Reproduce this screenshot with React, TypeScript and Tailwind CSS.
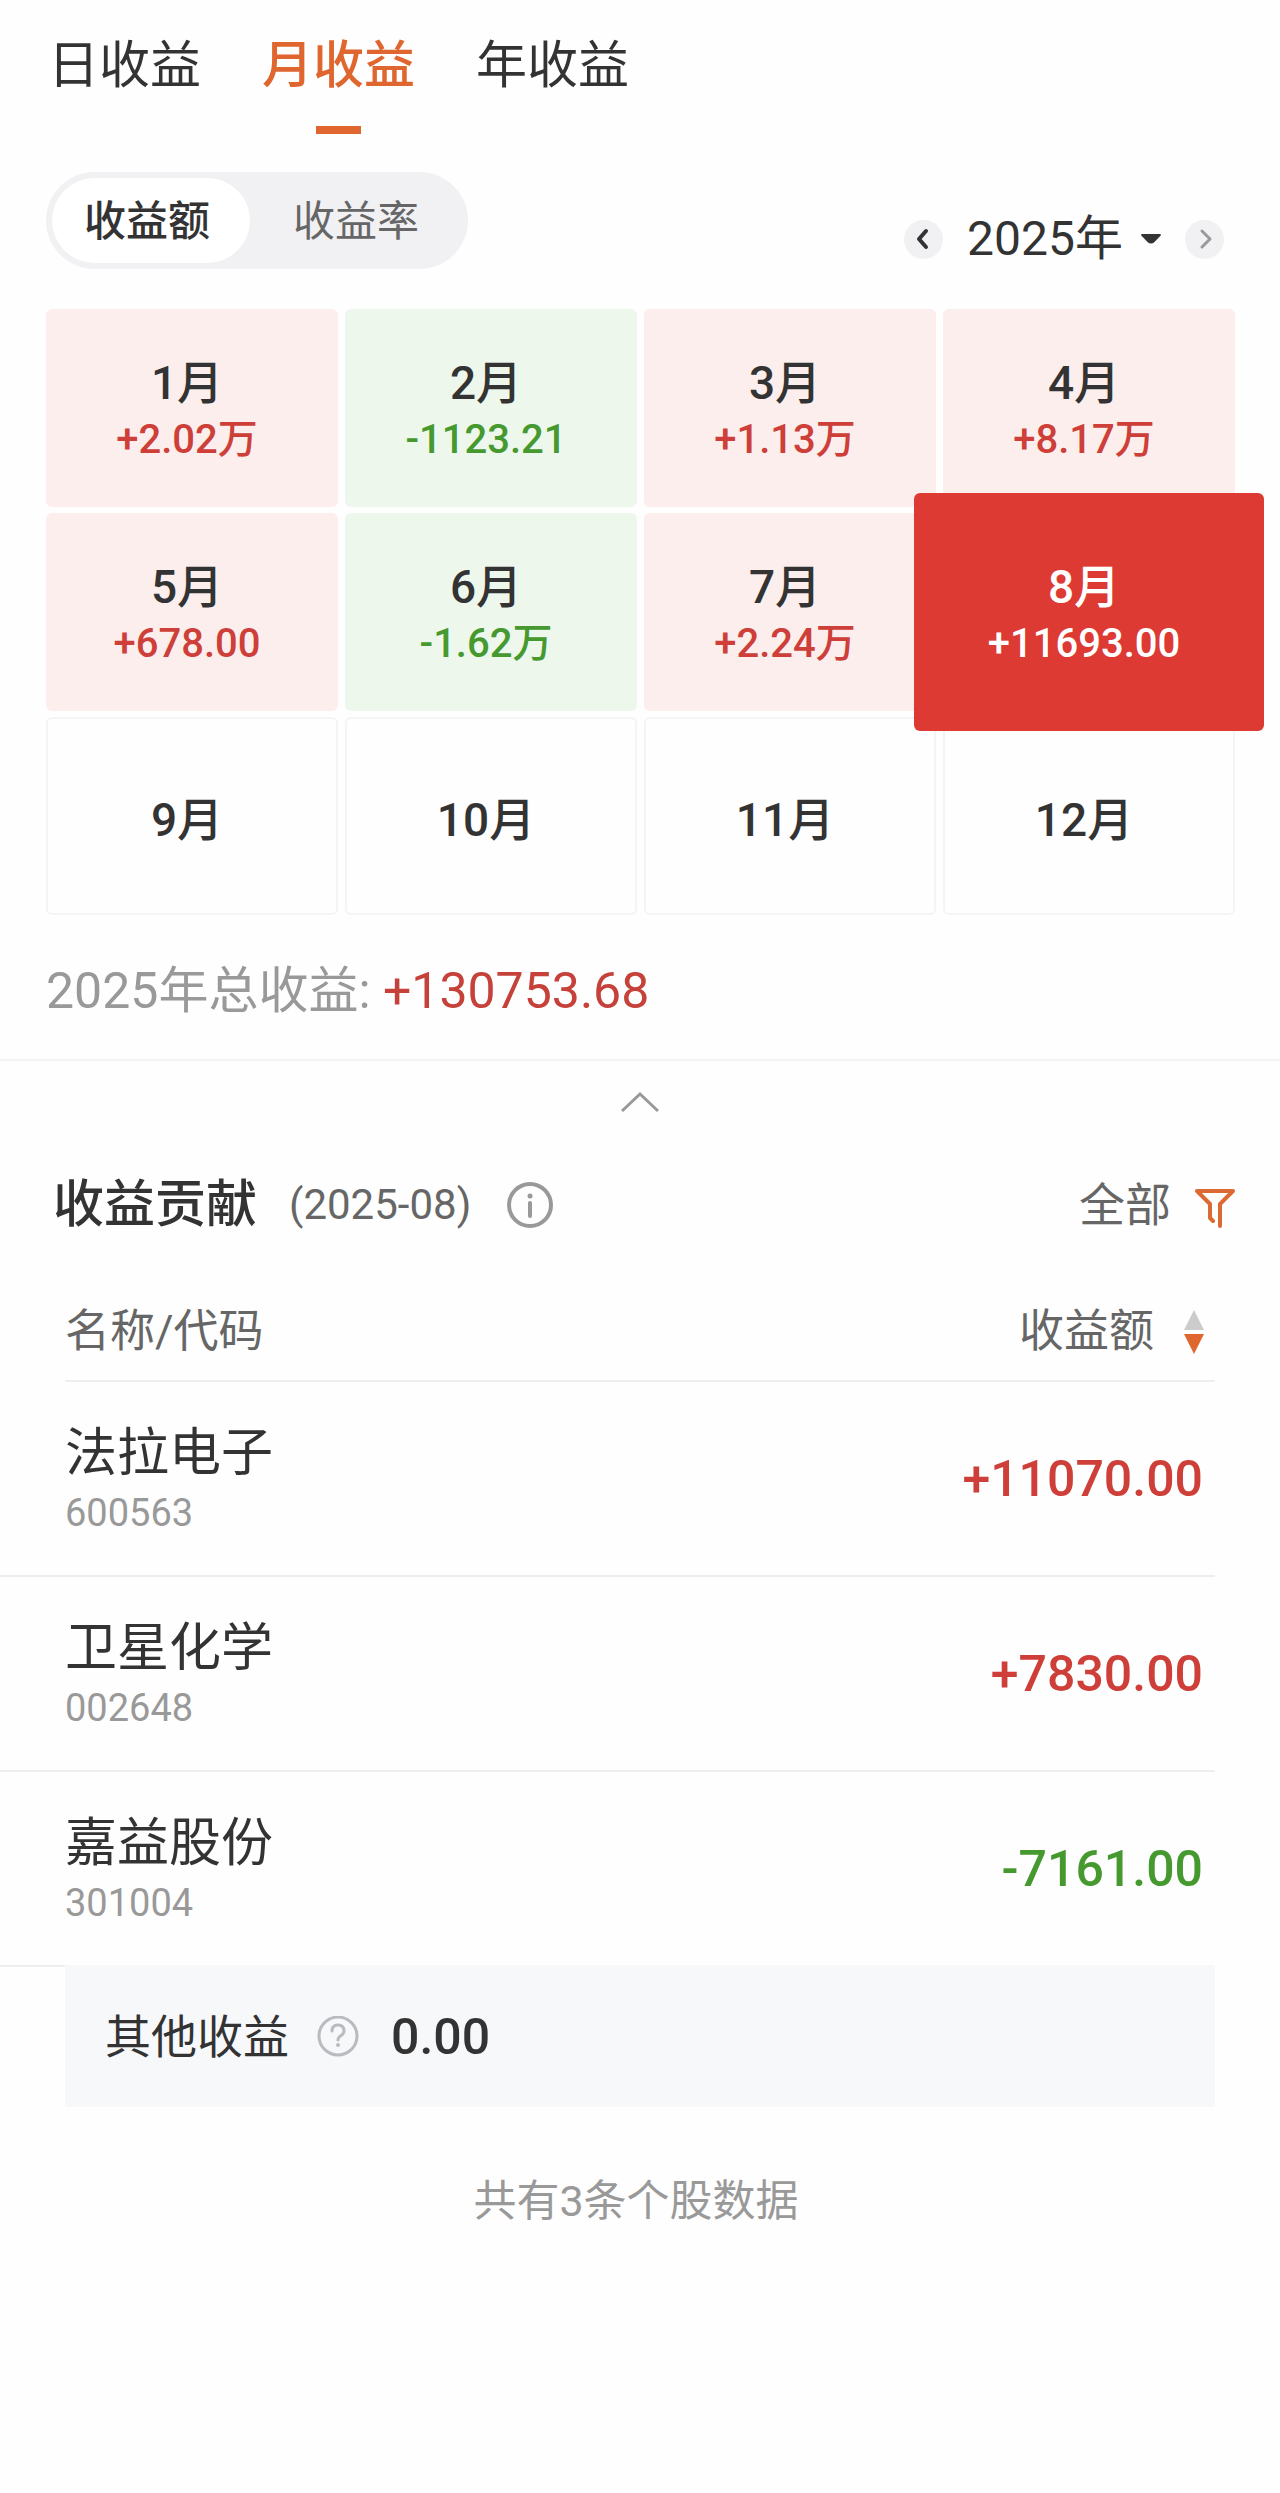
import React, { useState } from 'react'

const tabs = ['日收益', '月收益', '年收益']

const months = [
  { name: '1月', value: '+2.02万' },
  { name: '2月', value: '-1123.21' },
  { name: '3月', value: '+1.13万' },
  { name: '4月', value: '+8.17万' },
  { name: '5月', value: '+678.00' },
  { name: '6月', value: '-1.62万' },
  { name: '7月', value: '+2.24万' },
  { name: '8月', value: '+11693.00' },
  { name: '9月', value: '' },
  { name: '10月', value: '' },
  { name: '11月', value: '' },
  { name: '12月', value: '' },
]

const stocks = [
  { name: '法拉电子', code: '600563', amount: '+11070.00' },
  { name: '卫星化学', code: '002648', amount: '+7830.00' },
  { name: '嘉益股份', code: '301004', amount: '-7161.00' },
]

function monthStyle(value: string, selected: boolean) {
  const loss = value.startsWith('-')
  if (selected) {
    return loss
      ? 'relative z-10 -mx-[29px] -my-5 bg-[#3f9b2f] text-white'
      : 'relative z-10 -mx-[29px] -my-5 bg-[#dd3a33] text-white'
  }
  if (!value) return 'border-2 border-[#f4f4f4] text-[#333333]'
  return loss ? 'bg-[#edf7ec] text-[#333333]' : 'bg-[#fbeeed] text-[#333333]'
}

function valueStyle(value: string, selected: boolean) {
  if (selected) return 'text-white'
  return value.startsWith('-') ? 'text-[#45992f]' : 'text-[#cd3f38]'
}

export default function App() {
  const [tab, setTab] = useState('月收益')
  const [mode, setMode] = useState('收益额')
  const [month, setMonth] = useState('8月')
  const [year, setYear] = useState('2025')

  return (
    <main className="min-h-screen bg-[#fefefe] pb-16 font-[Roboto,'Noto_Sans_CJK_SC',sans-serif] text-[#333333]">
      {/* Tabs */}
      <nav className="flex gap-[61px] px-12 pt-9">
        {tabs.map((item) => (
          <button
            key={item}
            onClick={() => setTab(item)}
            className={`flex flex-col items-center gap-[30px] text-[51px] leading-[60px] ${tab === item ? 'font-medium text-[#e0662f]' : ''}`}
          >
            {item}
            <span className={`h-2 w-[45px] ${tab === item ? 'bg-[#e0662f]' : ''}`}></span>
          </button>
        ))}
      </nav>

      {/* Amount / rate switch and year picker */}
      <div className="mt-[38px] flex items-end justify-between pr-14 pl-[46px]">
        <div className="flex rounded-full bg-[#f1f1f4] p-[6px] text-[42px] leading-[60px]">
          <button
            onClick={() => setMode('收益额')}
            className={`h-[85px] rounded-full pt-[2px] pr-10 pl-8 ${mode === '收益额' ? 'bg-white font-medium' : 'text-[#666666]'}`}
          >
            收益额
          </button>
          <button
            onClick={() => setMode('收益率')}
            className={`h-[85px] rounded-full px-[43px] pt-[2px] ${mode === '收益率' ? 'bg-white font-medium' : 'text-[#666666]'}`}
          >
            收益率
          </button>
        </div>

        <div className="flex h-[60px] items-center">
          <button aria-label="上一年" className="flex size-[39px] items-center justify-center rounded-full bg-[#f1f1f3]">
            <svg width="20" height="24" viewBox="0 0 20 24" fill="none" stroke="#333333" strokeWidth="4" strokeLinecap="round" strokeLinejoin="round">
              <path d="M12 4L5 12L12 20" />
            </svg>
          </button>
          <label className="ml-6 flex items-center gap-[18px]">
            <select
              aria-label="年份"
              value={year}
              onChange={(e) => setYear(e.target.value)}
              className="appearance-none bg-transparent text-[48px] leading-[60px] outline-none"
            >
              <option value="2025">2025年</option>
              <option value="2024">2024年</option>
            </select>
            <svg width="20" height="10" viewBox="0 0 20 10" fill="#333333">
              <path d="M1 0H19Q20.500 0.500 19.500 1.800L13.500 8Q10 11 6.500 8L0.500 1.800Q-0.500 0.500 1 0Z" />
            </svg>
          </label>
          <button aria-label="下一年" className="ml-6 flex size-[39px] items-center justify-center rounded-full bg-[#f1f1f3]">
            <svg width="20" height="24" viewBox="0 0 20 24" fill="none" stroke="#999999" strokeWidth="3" strokeLinecap="round" strokeLinejoin="round">
              <path d="M7 4L15 12L7 20" />
            </svg>
          </button>
        </div>
      </div>

      {/* Months */}
      <div className="mt-10 grid auto-rows-[198px] grid-cols-4 gap-x-[7px] gap-y-[6px] pr-[45px] pl-[46px]">
        {months.map((item) => (
          <button
            key={item.name}
            disabled={!item.value}
            onClick={() => setMonth(item.name)}
            className={`flex flex-col items-center justify-center rounded-md pt-2 pr-[10px] font-medium ${monthStyle(item.value, month === item.name)}`}
          >
            <span className="text-[46px] leading-[56px]">{item.name}</span>
            {item.value && (
              <span className={`text-[40px] leading-[58px] ${valueStyle(item.value, month === item.name)}`}>{item.value}</span>
            )}
          </button>
        ))}
      </div>

      <p className="mt-[46px] px-[46px] text-[50px] leading-[60px] text-[#999999]">
        2025年总收益: <span className="text-[#c5413a]">+130753.68</span>
      </p>

      <div className="mt-[38px] flex justify-center border-t-2 border-[#f3f3f3]">
        <button aria-label="收起" className="flex h-[82px] w-20 items-center justify-center">
          <svg width="40" height="24" viewBox="0 0 40 24" fill="none" stroke="#999999" strokeWidth="3">
            <path d="M2 21L20 4L38 21" />
          </svg>
        </button>
      </div>

      {/* Contribution */}
      <section className="mt-8">
        <div className="flex items-center pr-[45px] pl-[53px] leading-[60px]">
          <h2 className="text-[51px] font-medium">收益贡献</h2>
          <span className="ml-8 text-[42px] text-[#666666]">(2025-08)</span>
          <button aria-label="说明" className="ml-9">
            <svg width="46" height="46" viewBox="0 0 46 46" fill="none" stroke="#999999" strokeWidth="4" strokeLinecap="round">
              <circle cx="23" cy="23" r="21" />
              <path d="M23 21V34" />
              <circle cx="23" cy="14" r="2.500" fill="#999999" stroke="none" />
            </svg>
          </button>
          <button className="ml-auto flex items-center gap-6 text-[46px] text-[#666666]">
            全部
            <svg width="40" height="46" viewBox="0 0 40 46" fill="none" stroke="#dc6a34" strokeWidth="4" strokeLinecap="round" strokeLinejoin="round">
              <path d="M18 39L15 36V22L2 9H38L25 22V44" />
            </svg>
          </button>
        </div>

        <div className="pr-[65px]">
          <table className="mt-[67px] w-full border-separate border-spacing-0">
            <thead className="text-[45px] leading-[60px] text-[#666666]">
              <tr>
                <th className="p-0 pl-[65px] text-left font-normal">
                  <div className="border-b-2 border-[#eeeeee] pb-[18px]">名称/代码</div>
                </th>
                <th className="p-0 font-normal">
                  <div className="flex justify-end border-b-2 border-[#eeeeee] pr-[11px] pb-[18px]">
                    <button className="flex items-center gap-[30px]">
                      收益额
                      <svg width="20" height="44" viewBox="0 0 20 44">
                        <path d="M10 0L20 20H0Z" fill="#cccccc" />
                        <path d="M0 24H20L10 44Z" fill="#e0662f" />
                      </svg>
                    </button>
                  </div>
                </th>
              </tr>
            </thead>
            <tbody>
              {stocks.map((stock) => (
                <tr key={stock.code}>
                  <td className="border-b-2 border-[#eeeeee] pt-10 pb-[35px] pl-[65px]">
                    <div className="text-[52px] leading-[64px]">{stock.name}</div>
                    <div className="text-[38px] leading-[54px] text-[#999999]">{stock.code}</div>
                  </td>
                  <td
                    className={`border-b-2 border-[#eeeeee] pr-3 text-right text-[50px] leading-[60px] font-medium ${stock.amount.startsWith('-') ? 'text-[#45992f]' : 'text-[#cd3f38]'}`}
                  >
                    {stock.amount}
                  </td>
                </tr>
              ))}
            </tbody>
          </table>
        </div>

        <div className="relative mx-[65px] -mt-[2px] flex h-[142px] items-center bg-[#f7f8fa] px-10 pt-[2px] leading-[60px]">
          <span className="text-[46px]">其他收益</span>
          <button aria-label="其他收益说明" className="ml-7">
            <svg width="42" height="42" viewBox="0 0 42 42" fill="none" stroke="#b9bbc0" strokeWidth="3" strokeLinecap="round">
              <circle cx="21" cy="20" r="19" />
              <path d="M15 15Q15 9 21 9Q27 9 27 15Q27 17.500 24 19.500Q21 21.500 21 24" />
              <circle cx="21" cy="29" r="2" fill="#b9bbc0" stroke="none" />
            </svg>
          </button>
          <span className="ml-8 text-[50px] font-medium">0.00</span>
        </div>

        <p className="mt-16 pr-2 text-center text-[43px] leading-[60px] text-[#999999]">共有3条个股数据</p>
      </section>
    </main>
  )
}
